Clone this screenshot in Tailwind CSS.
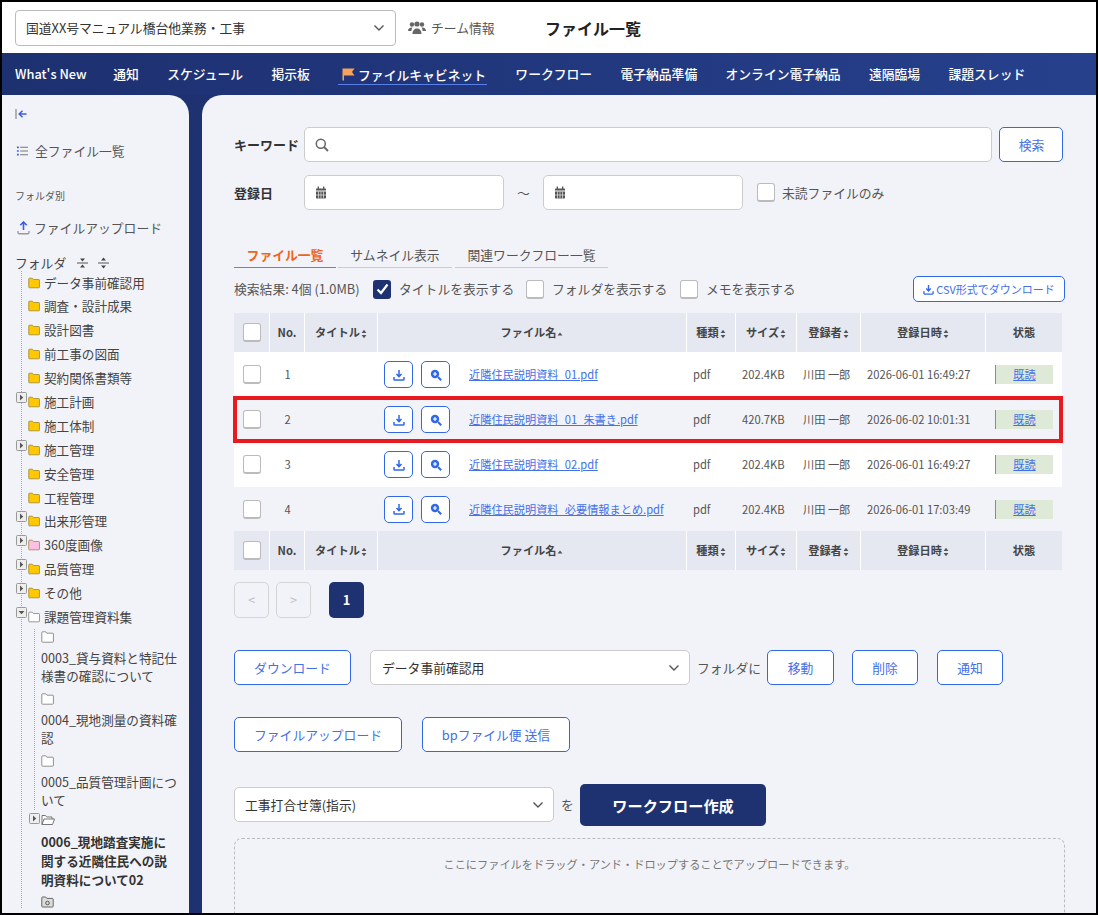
<!DOCTYPE html>
<html lang="ja">
<head>
  <meta charset="UTF-8" />
  <title>ファイル一覧</title>
  <script src="https://cdn.jsdelivr.net/npm/@tailwindcss/browser@4"></script>
</head>
<body class="bg-black font-['Noto_Sans_CJK_JP',sans-serif] text-[12.8px] text-[#444]">

  <!-- icons -->
  <svg class="hidden">
    <symbol id="i-folder" viewBox="0 0 13 12"><path d="M1.500 .8h3.200l1.200 1.400h5.800c.4 0 .7.3.7.7v7.600c0 .4-.3.7-.7.7H1.500c-.4 0-.7-.3-.7-.7V1.500c0-.4.3-.7.7-.7z" fill="currentColor" stroke="#94822e" stroke-width=".8"/></symbol>
    <symbol id="i-folder-w" viewBox="0 0 13 12"><path d="M1.500 .8h3.200l1.200 1.400h5.800c.4 0 .7.3.7.7v7.600c0 .4-.3.7-.7.7H1.500c-.4 0-.7-.3-.7-.7V1.500c0-.4.3-.7.7-.7z" fill="#fff" stroke="#777" stroke-width=".8"/></symbol>
    <symbol id="i-open" viewBox="0 0 14 12"><path d="M1 10.500V1.500h3.500l1.200 1.500h5.300v2M1 10.500l2-5.500h10.500l-2 5.500z" fill="#fff" stroke="#666" stroke-width=".9"/></symbol>
    <symbol id="i-plus" viewBox="0 0 11 11"><rect x=".5" y=".5" width="10" height="10" rx="1" fill="#eee" stroke="#999"/><path d="M4 2.500l3.200 3L4 8.500z" fill="#555"/></symbol>
    <symbol id="i-minus" viewBox="0 0 11 11"><rect x=".5" y=".5" width="10" height="10" rx="1" fill="#eee" stroke="#999"/><path d="M2.500 4l3 3.200 3-3.200z" fill="#555"/></symbol>
    <symbol id="i-dl" viewBox="0 0 12 12"><path d="M6 1v6.200M3.500 5L6 7.600 8.500 5M1 8v2.200c0 .4.3.8.8.8h8.400c.5 0 .8-.4.8-.8V8" fill="none" stroke="currentColor" stroke-width="1.500"/></symbol>
    <symbol id="i-zoom" viewBox="0 0 12 12"><circle cx="5" cy="5" r="4.200" fill="currentColor"/><path d="M8 8l3.200 3.200" stroke="currentColor" stroke-width="2"/><path d="M5 3v4M3 5h4" stroke="#fff" stroke-width="1.200"/></symbol>
    <symbol id="i-sort" viewBox="0 0 6 10"><path d="M3 .8L5.400 4H.6zM3 9.200L.6 6h4.800z" fill="#555"/></symbol>
    <symbol id="i-up" viewBox="0 0 6 4"><path d="M3 .5L5.500 3.500H.5z" fill="#555"/></symbol>
    <symbol id="i-cal" viewBox="0 0 12 13"><path d="M1 3.400c0-.6.4-1 1-1h8c.6 0 1 .4 1 1V4.500H1zM1 5.500h10v6c0 .6-.4 1-1 1H2c-.6 0-1-.4-1-1z" fill="#555"/><path d="M3.300 .5v2.500M8.700 .5v2.500" stroke="#555" stroke-width="1.300"/><path d="M3.500 5.500v7M6 5.500v7M8.500 5.500v7M1 9h10" stroke="#fff" stroke-width=".6"/></symbol>
    <symbol id="i-chev" viewBox="0 0 12 8"><path d="M1.500 1.500L6 6l4.500-4.500" fill="none" stroke="#555" stroke-width="1.400"/></symbol>
  </svg>

  <div class="h-[915px] overflow-hidden border-2 border-black bg-[#1e3170]">

    <!-- header -->
    <header class="flex h-[51px] items-center bg-white pl-[13px]">
      <div class="flex h-[36px] w-[381px] items-center justify-between rounded border border-[#bbb] bg-white pl-[10px] pr-[10px] text-[#333]">
        <span>国道XX号マニュアル橋台他業務・工事</span>
        <svg class="h-[8px] w-[12px]"><use href="#i-chev"/></svg>
      </div>
      <svg class="ml-3 h-[14px] w-[18px] text-[#666]" viewBox="0 0 18 14" fill="currentColor"><circle cx="4" cy="3.500" r="2.200"/><circle cx="9" cy="3" r="2.600"/><circle cx="14" cy="3.500" r="2.200"/><path d="M0 10c0-2 1.500-3.500 3.500-3.500h1C3.600 7.500 3.500 9 3.500 10zM4.500 13c0-3.500 2-5.500 4.500-5.500s4.500 2 4.500 5.500zM14.500 10c0-1-.1-2.500-1-3.500h1c2 0 3.500 1.500 3.500 3.500z"/></svg>
      <span class="ml-[5px] w-[63px] whitespace-nowrap text-[#555]">チーム情報</span>
      <h1 class="ml-[51px] text-[16px] font-bold text-[#222]">ファイル一覧</h1>
    </header>

    <!-- nav -->
    <nav class="flex h-[42px] items-center gap-[28.300px] bg-gradient-to-r from-[#1d3070] to-[#26408c] pl-[13px] font-medium text-white">
      <a class="w-[70px] whitespace-nowrap">What's New</a>
      <a>通知</a>
      <a>スケジュール</a>
      <a>掲示板</a>
      <a class="mt-[2px] flex h-[20px] items-center gap-[3px] border-b border-[#5b7fe8] pl-[4px] pr-[1px]">
        <svg class="h-[13px] w-[13px]" viewBox="0 0 13 13"><path d="M0.500 0.500h12l-2.500 3.500 2.500 3.500H2v5H.500z" fill="#f5a25d"/></svg>
        ファイルキャビネット
      </a>
      <a>ワークフロー</a>
      <a>電子納品準備</a>
      <a>オンライン電子納品</a>
      <a>遠隔臨場</a>
      <a>課題スレッド</a>
    </nav>

    <div class="flex h-[818px] gap-[13px]">

      <!-- sidebar -->
      <aside class="w-[187px] shrink-0 overflow-hidden rounded-tr-[20px] bg-[#f2f3f8] pl-[13px] pr-[10px] pt-[13px]">
        <svg class="h-[12px] w-[12px] text-[#3c5fe0]" viewBox="0 0 12 12"><path d="M1 1v10" stroke="#888" stroke-width="1.200"/><path d="M11.500 6H4.500M7.500 2.800L4.200 6l3.300 3.200" fill="none" stroke="currentColor" stroke-width="1.500"/></svg>

        <div class="mt-[21px] flex items-center gap-[7px] text-[#555]">
          <svg class="ml-[1px] h-[12px] w-[12px]" viewBox="0 0 13 12"><path d="M1 2h2M1 6h2M1 10h2" stroke="#3c5fe0" stroke-width="1.800"/><path d="M4.500 2H13M4.500 6H13M4.500 10H13" stroke="#777" stroke-width="1.200"/></svg>
          全ファイル一覧
        </div>

        <div class="mt-[28px] text-[10px] text-[#555]">フォルダ別</div>

        <div class="mt-[15px] flex items-center gap-[4px] text-[#555]">
          <svg class="ml-[2px] h-[14px] w-[13px]" viewBox="0 0 13 14"><path d="M6.500 1v8M3.300 4.300L6.500 1l3.200 3.300" fill="none" stroke="#3c5fe0" stroke-width="1.600"/><path d="M1 10v1.500c0 .8.500 1.300 1.300 1.300h8.400c.8 0 1.300-.5 1.300-1.300V10" fill="none" stroke="#999" stroke-width="1.400"/></svg>
          ファイルアップロード
        </div>

        <div class="mt-[16px] flex items-center">
          <span class="text-[#444]">フォルダ</span>
          <svg class="ml-[11px] h-[12px] w-[11px]" viewBox="0 0 11 12"><path d="M0 6h11" stroke="#555"/><path d="M5.500 4.500L3 1.500h5zM5.500 7.500L3 10.500h5z" fill="#444"/></svg>
          <svg class="ml-[10px] h-[12px] w-[11px]" viewBox="0 0 11 12"><path d="M0 6h11" stroke="#555"/><path d="M5.500 .5L3 3.500h5zM5.500 11.500L3 8.500h5z" fill="#444"/></svg>
        </div>

        <!-- tree -->
        <ul class="relative -mt-[2px] ml-[6px] border-l border-dotted border-[#aaa] text-[12.600px] leading-[23.900px] text-[#444]">
          <li class="flex h-[23.900px] items-center gap-[4px] pl-[6px] text-[#ffc800]"><svg class="h-[12px] w-[12px]"><use href="#i-folder"/></svg><span class="text-[#444]">データ事前確認用</span></li>
          <li class="flex h-[23.900px] items-center gap-[4px] pl-[6px] text-[#ffc800]"><svg class="h-[12px] w-[12px]"><use href="#i-folder"/></svg><span class="text-[#444]">調査・設計成果</span></li>
          <li class="flex h-[23.900px] items-center gap-[4px] pl-[6px] text-[#ffc800]"><svg class="h-[12px] w-[12px]"><use href="#i-folder"/></svg><span class="text-[#444]">設計図書</span></li>
          <li class="flex h-[23.900px] items-center gap-[4px] pl-[6px] text-[#ffc800]"><svg class="h-[12px] w-[12px]"><use href="#i-folder"/></svg><span class="text-[#444]">前工事の図面</span></li>
          <li class="flex h-[23.900px] items-center gap-[4px] pl-[6px] text-[#ffc800]"><svg class="h-[12px] w-[12px]"><use href="#i-folder"/></svg><span class="text-[#444]">契約関係書類等</span></li>
          <li class="relative flex h-[23.900px] items-center gap-[4px] pl-[6px] text-[#ffc800]"><svg class="absolute -left-[6px] top-[2px] h-[11px] w-[11px]"><use href="#i-plus"/></svg><svg class="h-[12px] w-[12px]"><use href="#i-folder"/></svg><span class="text-[#444]">施工計画</span></li>
          <li class="flex h-[23.900px] items-center gap-[4px] pl-[6px] text-[#ffc800]"><svg class="h-[12px] w-[12px]"><use href="#i-folder"/></svg><span class="text-[#444]">施工体制</span></li>
          <li class="relative flex h-[23.900px] items-center gap-[4px] pl-[6px] text-[#ffc800]"><svg class="absolute -left-[6px] top-[2px] h-[11px] w-[11px]"><use href="#i-plus"/></svg><svg class="h-[12px] w-[12px]"><use href="#i-folder"/></svg><span class="text-[#444]">施工管理</span></li>
          <li class="flex h-[23.900px] items-center gap-[4px] pl-[6px] text-[#ffc800]"><svg class="h-[12px] w-[12px]"><use href="#i-folder"/></svg><span class="text-[#444]">安全管理</span></li>
          <li class="flex h-[23.900px] items-center gap-[4px] pl-[6px] text-[#ffc800]"><svg class="h-[12px] w-[12px]"><use href="#i-folder"/></svg><span class="text-[#444]">工程管理</span></li>
          <li class="relative flex h-[23.900px] items-center gap-[4px] pl-[6px] text-[#ffc800]"><svg class="absolute -left-[6px] top-[2px] h-[11px] w-[11px]"><use href="#i-plus"/></svg><svg class="h-[12px] w-[12px]"><use href="#i-folder"/></svg><span class="text-[#444]">出来形管理</span></li>
          <li class="relative flex h-[23.900px] items-center gap-[4px] pl-[6px] text-[#ffc0e8]"><svg class="absolute -left-[6px] top-[2px] h-[11px] w-[11px]"><use href="#i-plus"/></svg><svg class="h-[12px] w-[12px]"><use href="#i-folder"/></svg><span class="text-[#444]">360度画像</span></li>
          <li class="relative flex h-[23.900px] items-center gap-[4px] pl-[6px] text-[#ffc800]"><svg class="absolute -left-[6px] top-[2px] h-[11px] w-[11px]"><use href="#i-plus"/></svg><svg class="h-[12px] w-[12px]"><use href="#i-folder"/></svg><span class="text-[#444]">品質管理</span></li>
          <li class="relative flex h-[23.900px] items-center gap-[4px] pl-[6px] text-[#ffc800]"><svg class="absolute -left-[6px] top-[2px] h-[11px] w-[11px]"><use href="#i-plus"/></svg><svg class="h-[12px] w-[12px]"><use href="#i-folder"/></svg><span class="text-[#444]">その他</span></li>
          <li class="relative flex h-[23.900px] items-center gap-[4px] pl-[6px]"><svg class="absolute -left-[6px] top-[2px] h-[11px] w-[11px]"><use href="#i-minus"/></svg><svg class="h-[12px] w-[12px]"><use href="#i-folder-w"/></svg><span class="text-[#444]">課題管理資料集</span></li>
          <li class="ml-[12px]">
            <ul class="border-l border-dotted border-[#aaa] pl-[6px] text-[12.600px] leading-[18.500px]">
              <li class="pb-[6px] pt-[2px]"><svg class="h-[12px] w-[13px]"><use href="#i-folder-w"/></svg><p class="mt-[6px]">0003_貸与資料と特記仕様書の確認について</p></li>
              <li class="pb-[6px] pt-[1px]"><svg class="h-[12px] w-[13px]"><use href="#i-folder-w"/></svg><p class="mt-[6px]">0004_現地測量の資料確認</p></li>
              <li class="pt-[1px]"><svg class="h-[12px] w-[13px]"><use href="#i-folder-w"/></svg><p class="mt-[6px]">0005_品質管理計画について</p></li>
            </ul>
            <div class="relative pl-[7px] pt-[4px] text-[12.600px] leading-[19px]">
              <svg class="absolute -left-[5px] top-[3px] h-[11px] w-[11px]"><use href="#i-plus"/></svg>
              <svg class="h-[12px] w-[14px]"><use href="#i-open"/></svg>
              <p class="mt-[6px] w-[136px] font-bold text-[#333]">0006_現地踏査実施に関する近隣住民への説明資料について02</p>
              <svg class="mt-[7px] h-[12px] w-[13px]" viewBox="0 0 13 12"><path d="M1.500 1h3.200l1.200 1.400h5.600c.4 0 .7.3.7.7v7.200c0 .4-.3.7-.7.7H1.500c-.4 0-.7-.3-.7-.7V1.700c0-.4.3-.7.7-.7z" fill="#ddd" stroke="#666"/><circle cx="6.500" cy="7" r="1.800" fill="none" stroke="#555"/></svg>
            </div>
          </li>
        </ul>
      </aside>

      <!-- main -->
      <main class="relative min-w-0 flex-1 overflow-hidden rounded-tl-[20px] bg-[#f2f3f8] pl-[32px] pr-[31px] pt-[32px]">

        <!-- search -->
        <div class="flex items-center">
          <label class="w-[70px] text-[13px] font-bold text-[#333]">キーワード</label>
          <div class="flex h-[35px] w-[688px] items-center rounded-[5px] border border-[#ccc] bg-white pl-[10px]">
            <svg class="h-[14px] w-[14px]" viewBox="0 0 14 14"><circle cx="5.800" cy="5.800" r="4.500" fill="none" stroke="#666" stroke-width="1.500"/><path d="M9 9l4 4" stroke="#666" stroke-width="1.800"/></svg>
          </div>
          <button class="ml-[7px] h-[35px] w-[64px] rounded-[5px] border border-[#3168e8] bg-white pl-[1px] text-[#4470e8]">検索</button>
        </div>

        <div class="mt-[13px] flex items-center">
          <label class="w-[70px] text-[13px] font-bold text-[#333]">登録日</label>
          <div class="flex h-[35px] w-[200px] items-center rounded-[5px] border border-[#ccc] bg-white pl-[10px]"><svg class="h-[13px] w-[12px]"><use href="#i-cal"/></svg></div>
          <span class="w-[39px] text-center text-[#555]">～</span>
          <div class="flex h-[35px] w-[200px] items-center rounded-[5px] border border-[#ccc] bg-white pl-[10px]"><svg class="h-[13px] w-[12px]"><use href="#i-cal"/></svg></div>
          <span class="ml-[14px] h-[19px] w-[18px] rounded-[3px] border border-b-2 border-[#bbb] bg-white"></span>
          <span class="ml-[7px] text-[#555]">未読ファイルのみ</span>
        </div>

        <!-- tabs -->
        <div class="mt-[37px] flex h-[21px] gap-[2px] leading-[16px]">
          <span class="w-[102px] border-b border-[#f06414] text-center font-bold text-[#f06414]">ファイル一覧</span>
          <span class="w-[114px] border-b border-[#ccc] text-center text-[#555]">サムネイル表示</span>
          <span class="ml-[1px] w-[153px] border-b border-[#ccc] text-center text-[#555]">関連ワークフロー一覧</span>
        </div>

        <!-- result options -->
        <div class="mt-[8px] flex h-[26px] w-[831px] items-center text-[#555]">
          <span class="w-[139px] whitespace-nowrap">検索結果: 4個 (1.0MB)</span>
          <span class="flex h-[19px] w-[18px] items-center justify-center rounded-[3px] bg-[#1e3170]"><svg class="h-[12px] w-[13px]" viewBox="0 0 13 12"><path d="M1.500 6.500L5 10l6.500-8.500" fill="none" stroke="#fff" stroke-width="2.200"/></svg></span>
          <span class="ml-[8px] w-[127px]">タイトルを表示する</span>
          <span class="h-[19px] w-[18px] rounded-[3px] border border-b-2 border-[#bbb] bg-white"></span>
          <span class="ml-[8px] w-[128px]">フォルダを表示する</span>
          <span class="h-[19px] w-[18px] rounded-[3px] border border-b-2 border-[#bbb] bg-white"></span>
          <span class="ml-[8px]">メモを表示する</span>
          <button class="ml-auto flex h-[26px] w-[152px] items-center justify-center gap-[2px] rounded-[5px] border border-[#3168e8] bg-white text-[11px] text-[#4470e8]"><svg class="h-[11px] w-[11px] text-[#3168e8]"><use href="#i-dl"/></svg>CSV形式でダウンロード</button>
        </div>

        <!-- table -->
        <table class="mt-[11px] w-[828px] table-fixed border-separate border-spacing-0 text-[11.200px] text-[#555]">
          <colgroup>
            <col class="w-[36px]"/><col class="w-[35px]"/><col class="w-[73px]"/><col class="w-[309px]"/><col class="w-[49px]"/><col class="w-[61px]"/><col class="w-[64px]"/><col class="w-[125px]"/><col class="w-[76px]"/>
          </colgroup>
          <thead>
            <tr class="h-[39px] bg-[#e5e8f1] text-[#444]">
              <th class="border-r border-white"><span class="mx-auto block h-[19px] w-[18px] rounded-[3px] border border-b-2 border-[#bbb] bg-white"></span></th>
              <th class="border-r border-white font-bold">No.</th>
              <th class="border-r border-white font-bold">タイトル<svg class="ml-[1px] inline h-[10px] w-[6px]"><use href="#i-sort"/></svg></th>
              <th class="border-r border-white font-bold">ファイル名<svg class="ml-[1px] inline h-[4px] w-[6px]"><use href="#i-up"/></svg></th>
              <th class="border-r border-white font-bold">種類<svg class="ml-[1px] inline h-[10px] w-[6px]"><use href="#i-sort"/></svg></th>
              <th class="border-r border-white font-bold">サイズ<svg class="ml-[1px] inline h-[10px] w-[6px]"><use href="#i-sort"/></svg></th>
              <th class="border-r border-white font-bold">登録者<svg class="ml-[1px] inline h-[10px] w-[6px]"><use href="#i-sort"/></svg></th>
              <th class="border-r border-white font-bold">登録日時<svg class="ml-[1px] inline h-[10px] w-[6px]"><use href="#i-sort"/></svg></th>
              <th class="font-bold">状態</th>
            </tr>
          </thead>
          <tbody>
            <tr class="h-[45px] bg-white">
              <td><span class="mx-auto block h-[19px] w-[18px] rounded-[3px] border border-b-2 border-[#bbb] bg-white"></span></td>
              <td class="text-center">1</td>
              <td></td>
              <td class="pl-[6px]"><div class="flex items-center"><button class="flex h-[27px] w-[29px] items-center justify-center rounded-[5px] border border-[#3168e8] bg-white text-[#3168e8]"><svg class="h-[12px] w-[12px]"><use href="#i-dl"/></svg></button><button class="ml-[8px] flex h-[27px] w-[29px] items-center justify-center rounded-[5px] border border-[#3168e8] bg-white text-[#3168e8]"><svg class="h-[12px] w-[12px]"><use href="#i-zoom"/></svg></button><a class="ml-[19px] text-[#4470e8] underline">近隣住民説明資料_01.pdf</a></div></td>
              <td class="pl-[6px]">pdf</td>
              <td class="pl-[6px]">202.4KB</td>
              <td class="pl-[6px]">川田 一郎</td>
              <td class="pl-[6px] whitespace-nowrap">2026-06-01 16:49:27</td>
              <td class="pl-[9px] pr-[9px]"><div class="border-l border-[#6aa84f] bg-[#dfe9d8] text-center leading-[19px]"><a class="text-[#4470e8] underline">既読</a></div></td>
            </tr>
            <tr class="h-[45px] bg-[#f2f3f8]">
              <td><span class="mx-auto block h-[19px] w-[18px] rounded-[3px] border border-b-2 border-[#bbb] bg-white"></span></td>
              <td class="text-center">2</td>
              <td></td>
              <td class="pl-[6px]"><div class="flex items-center"><button class="flex h-[27px] w-[29px] items-center justify-center rounded-[5px] border border-[#3168e8] bg-white text-[#3168e8]"><svg class="h-[12px] w-[12px]"><use href="#i-dl"/></svg></button><button class="ml-[8px] flex h-[27px] w-[29px] items-center justify-center rounded-[5px] border border-[#3168e8] bg-white text-[#3168e8]"><svg class="h-[12px] w-[12px]"><use href="#i-zoom"/></svg></button><a class="ml-[19px] text-[#4470e8] underline">近隣住民説明資料_01_朱書き.pdf</a></div></td>
              <td class="pl-[6px]">pdf</td>
              <td class="pl-[6px]">420.7KB</td>
              <td class="pl-[6px]">川田 一郎</td>
              <td class="pl-[6px] whitespace-nowrap">2026-06-02 10:01:31</td>
              <td class="pl-[9px] pr-[9px]"><div class="border-l border-[#6aa84f] bg-[#dfe9d8] text-center leading-[19px]"><a class="text-[#4470e8] underline">既読</a></div></td>
            </tr>
            <tr class="h-[45px] bg-white">
              <td><span class="mx-auto block h-[19px] w-[18px] rounded-[3px] border border-b-2 border-[#bbb] bg-white"></span></td>
              <td class="text-center">3</td>
              <td></td>
              <td class="pl-[6px]"><div class="flex items-center"><button class="flex h-[27px] w-[29px] items-center justify-center rounded-[5px] border border-[#3168e8] bg-white text-[#3168e8]"><svg class="h-[12px] w-[12px]"><use href="#i-dl"/></svg></button><button class="ml-[8px] flex h-[27px] w-[29px] items-center justify-center rounded-[5px] border border-[#3168e8] bg-white text-[#3168e8]"><svg class="h-[12px] w-[12px]"><use href="#i-zoom"/></svg></button><a class="ml-[19px] text-[#4470e8] underline">近隣住民説明資料_02.pdf</a></div></td>
              <td class="pl-[6px]">pdf</td>
              <td class="pl-[6px]">202.4KB</td>
              <td class="pl-[6px]">川田 一郎</td>
              <td class="pl-[6px] whitespace-nowrap">2026-06-01 16:49:27</td>
              <td class="pl-[9px] pr-[9px]"><div class="border-l border-[#6aa84f] bg-[#dfe9d8] text-center leading-[19px]"><a class="text-[#4470e8] underline">既読</a></div></td>
            </tr>
            <tr class="h-[44px] bg-[#f2f3f8]">
              <td><span class="mx-auto block h-[19px] w-[18px] rounded-[3px] border border-b-2 border-[#bbb] bg-white"></span></td>
              <td class="text-center">4</td>
              <td></td>
              <td class="pl-[6px]"><div class="flex items-center"><button class="flex h-[27px] w-[29px] items-center justify-center rounded-[5px] border border-[#3168e8] bg-white text-[#3168e8]"><svg class="h-[12px] w-[12px]"><use href="#i-dl"/></svg></button><button class="ml-[8px] flex h-[27px] w-[29px] items-center justify-center rounded-[5px] border border-[#3168e8] bg-white text-[#3168e8]"><svg class="h-[12px] w-[12px]"><use href="#i-zoom"/></svg></button><a class="ml-[19px] whitespace-nowrap text-[#4470e8] underline">近隣住民説明資料_必要情報まとめ.pdf</a></div></td>
              <td class="pl-[6px]">pdf</td>
              <td class="pl-[6px]">202.4KB</td>
              <td class="pl-[6px]">川田 一郎</td>
              <td class="pl-[6px] whitespace-nowrap">2026-06-01 17:03:49</td>
              <td class="pl-[9px] pr-[9px]"><div class="border-l border-[#6aa84f] bg-[#dfe9d8] text-center leading-[19px]"><a class="text-[#4470e8] underline">既読</a></div></td>
            </tr>
          </tbody>
          <tfoot>
            <tr class="h-[39px] bg-[#e5e8f1] text-[#444]">
              <th class="border-r border-white"><span class="mx-auto block h-[19px] w-[18px] rounded-[3px] border border-b-2 border-[#bbb] bg-white"></span></th>
              <th class="border-r border-white font-bold">No.</th>
              <th class="border-r border-white font-bold">タイトル<svg class="ml-[1px] inline h-[10px] w-[6px]"><use href="#i-sort"/></svg></th>
              <th class="border-r border-white font-bold">ファイル名<svg class="ml-[1px] inline h-[4px] w-[6px]"><use href="#i-up"/></svg></th>
              <th class="border-r border-white font-bold">種類<svg class="ml-[1px] inline h-[10px] w-[6px]"><use href="#i-sort"/></svg></th>
              <th class="border-r border-white font-bold">サイズ<svg class="ml-[1px] inline h-[10px] w-[6px]"><use href="#i-sort"/></svg></th>
              <th class="border-r border-white font-bold">登録者<svg class="ml-[1px] inline h-[10px] w-[6px]"><use href="#i-sort"/></svg></th>
              <th class="border-r border-white font-bold">登録日時<svg class="ml-[1px] inline h-[10px] w-[6px]"><use href="#i-sort"/></svg></th>
              <th class="font-bold">状態</th>
            </tr>
          </tfoot>
        </table>

        <!-- red highlight over row 2 -->
        <div class="absolute left-[31px] top-[301px] h-[47px] w-[830px] border-[4px] border-[#e8191f]"></div>

        <!-- pagination -->
        <div class="mt-[12px] flex h-[36px] gap-[7px]">
          <button class="w-[35px] rounded-[5px] border border-[#d5d5d5] text-[#bbb]">&lt;</button>
          <button class="w-[35px] rounded-[5px] border border-[#d5d5d5] text-[#bbb]">&gt;</button>
          <button class="ml-[11px] w-[35px] rounded-[5px] bg-[#1e3170] font-bold text-white">1</button>
        </div>

        <!-- actions -->
        <div class="mt-[32px] flex h-[35px] items-center">
          <button class="h-full w-[117px] rounded-[5px] border border-[#3168e8] bg-white text-[#4470e8]">ダウンロード</button>
          <div class="ml-[19px] flex h-full w-[320px] items-center justify-between rounded-[5px] border border-[#ccc] bg-white pl-[11px] pr-[9px] text-[#333]">データ事前確認用<svg class="h-[8px] w-[12px]"><use href="#i-chev"/></svg></div>
          <span class="ml-[7px] w-[70px] whitespace-nowrap text-[#555]">フォルダに</span>
          <button class="h-full w-[67px] rounded-[5px] border border-[#3168e8] bg-white text-[#4470e8]">移動</button>
          <button class="ml-[18px] h-full w-[66px] rounded-[5px] border border-[#3168e8] bg-white text-[#4470e8]">削除</button>
          <button class="ml-[19px] h-full w-[66px] rounded-[5px] border border-[#3168e8] bg-white text-[#4470e8]">通知</button>
        </div>

        <div class="mt-[32px] flex h-[35px] gap-[20px]">
          <button class="w-[168px] rounded-[5px] border border-[#3168e8] bg-white text-[#4470e8]">ファイルアップロード</button>
          <button class="w-[148px] rounded-[5px] border border-[#3168e8] bg-white text-[#4470e8]">bpファイル便 送信</button>
        </div>

        <div class="mt-[32px] flex h-[42px] items-start">
          <div class="mt-[3px] flex h-[35px] w-[320px] items-center justify-between rounded-[5px] border border-[#ccc] bg-white pl-[10px] pr-[9px] text-[#333]">工事打合せ簿(指示)<svg class="h-[8px] w-[12px]"><use href="#i-chev"/></svg></div>
          <span class="ml-[7px] w-[19px] self-center text-[#555]">を</span>
          <button class="h-full w-[186px] rounded-[5px] bg-[#1e3170] text-[15.200px] font-bold text-white">ワークフロー作成</button>
        </div>

        <div class="mt-[12px] h-[120px] w-[831px] rounded-[8px] border border-dashed border-[#bbb] pt-[17px] text-center text-[11.200px] text-[#777]">ここにファイルをドラッグ・アンド・ドロップすることでアップロードできます。</div>
      </main>
    </div>
  </div>
</body>
</html>
